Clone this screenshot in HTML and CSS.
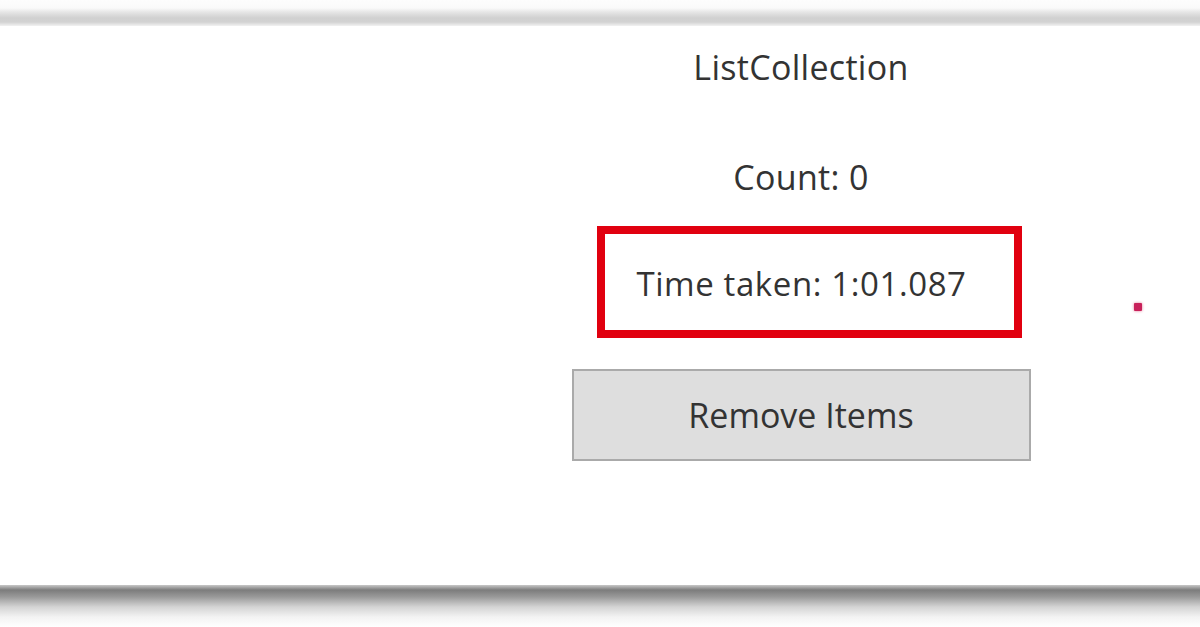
FILE: index.html
```html
<!DOCTYPE html>
<html>
<head>
<meta charset="utf-8">
<link rel="stylesheet" href="styles.css">
</head>
<body>
<div class="top-band"></div>
<div class="window">
  <div class="spacer"></div>
  <div class="column">
    <div class="title">ListCollection</div>
    <div class="count">Count: 0</div>
    <div class="time-box"><span>Time taken: 1:01.087</span></div>
    <div class="button">Remove Items</div>
  </div>
  <div class="side">
    <div class="marker"></div>
  </div>
</div>
<div class="bottom-shadow"></div>
</body>
</html>
```
FILE: styles.css
```css
html, body {
  margin: 0;
  padding: 0;
  background: #ffffff;
}
body {
  width: 1200px;
  height: 627px;
  overflow: hidden;
  font-family: "Open Sans", "Noto Sans", sans-serif;
  color: #333333;
}
.top-band {
  height: 26px;
  background: linear-gradient(to bottom, #fdfdfd 0, #fafafa 8px, #e6e6e6 12px, #d0d0d0 18px, #d2d2d2 22px, #f2f2f2 26px);
}
.window {
  height: 559px;
  display: grid;
  grid-template-columns: 571px 460px 1fr;
  background: #ffffff;
}
.column {
  display: flex;
  flex-direction: column;
  align-items: center;
  padding-top: 21px;
}
.title, .count {
  font-size: 34px;
  line-height: 40px;
  height: 40px;
  letter-spacing: 0.3px;
}
.count {
  margin-top: 70px;
}
.time-box {
  align-self: flex-start;
  margin-left: 26px;
  margin-top: 29px;
  width: 409px;
  height: 96px;
  border: 8px solid #e1000f;
  display: flex;
  align-items: center;
  justify-content: center;
  font-size: 33px;
  letter-spacing: 0.6px;
}
.time-box span {
  margin-left: -16px;
  margin-top: 2px;
}
.button {
  margin-top: 31px;
  width: 455px;
  height: 88px;
  background: #dedede;
  border: 2px solid #aaaaaa;
  display: flex;
  align-items: center;
  justify-content: center;
  font-size: 34px;
  color: #333333;
}
.side {
  padding-left: 103px;
  padding-top: 277px;
}
.marker {
  width: 8px;
  height: 8px;
  background: #c8205a;
  border-radius: 1px;
  box-shadow: 0 0 3px #e07090;
}
.bottom-shadow {
  height: 42px;
  background: linear-gradient(to bottom, #c8c8c8 0, #7c7c7c 5px, #9a9a9a 12px, #d4d4d4 22px, #f3f3f3 32px, #ffffff 42px);
}
```
